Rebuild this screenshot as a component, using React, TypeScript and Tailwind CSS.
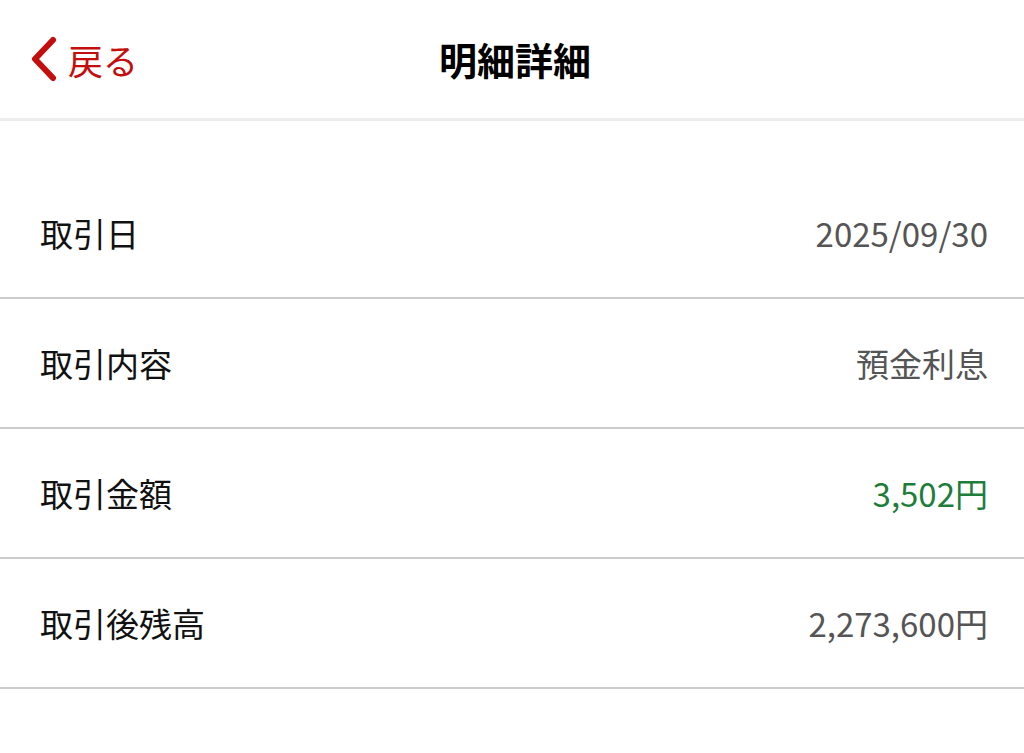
import React from "react";

const rows: { label: string; value: string; green?: boolean }[] = [
  { label: "取引日", value: "2025/09/30" },
  { label: "取引内容", value: "預金利息" },
  { label: "取引金額", value: "3,502円", green: true },
  { label: "取引後残高", value: "2,273,600円" },
];

export default function App() {
  return (
    <div
      className="w-[1024px] h-[753px] bg-white overflow-hidden"
      style={{ fontFamily: '"Noto Sans CJK JP", "Noto Sans", sans-serif' }}
    >
      <header className="relative h-[121px] flex items-center justify-center border-b-[3px] border-[#ececec]">
        <div className="absolute left-[28px] top-0 h-full flex items-center gap-[10px] text-[#c40d0d]">
          <svg width="30" height="46" viewBox="0 0 30 46">
            <path d="M25 4 L7 23 L25 42" fill="none" stroke="#c40d0d" strokeWidth="6" strokeLinecap="round" strokeLinejoin="round" />
          </svg>
          <span className="text-[35px] leading-none">戻る</span>
        </div>
        <h1 className="text-[38px] font-bold text-black leading-none pl-[6px]">明細詳細</h1>
      </header>
      <div className="pt-[48px]">
        {rows.map((r) => (
          <div key={r.label} className="h-[130px] flex items-center justify-between px-[40px] pr-[36px] border-b-2 border-[#cccccc]">
            <span className="text-[33px] text-[#111] leading-none">{r.label}</span>
            <span className={`text-[33px] leading-none ${r.green ? "text-[#1e7d3a]" : "text-[#555]"}`}>{r.value}</span>
          </div>
        ))}
      </div>
    </div>
  );
}
